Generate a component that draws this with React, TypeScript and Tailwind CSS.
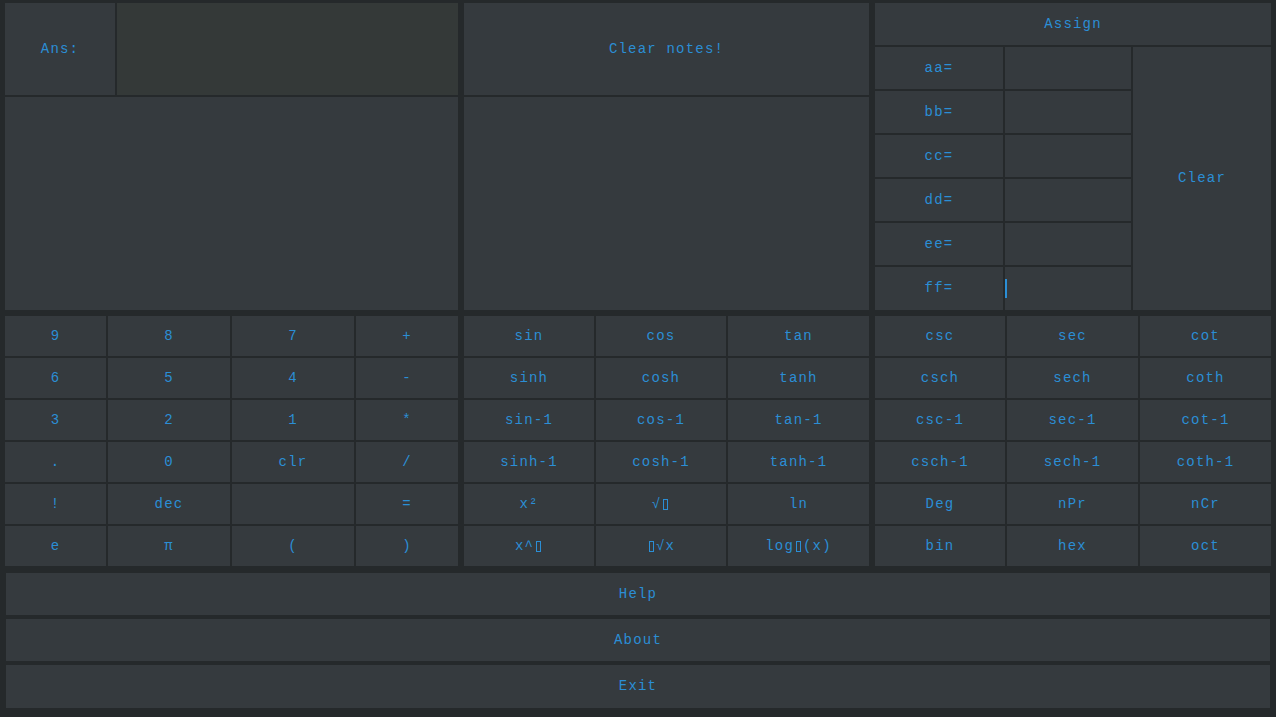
import React from "react";

const cell = "bg-[#353a3e] flex items-center justify-center text-[#2b8ed5]";

function Tofu() {
  return <span className="inline-block w-[5px] h-[11px] border border-[#2b8ed5] align-[-1px] mx-[2px]" />;
}

const basicKeys: React.ReactNode[] = [
  "9", "8", "7", "+",
  "6", "5", "4", "-",
  "3", "2", "1", "*",
  ".", "0", "clr", "/",
  "!", "dec", "", "=",
  "e", "π", "(", ")",
];

const trigKeys: React.ReactNode[] = [
  "sin", "cos", "tan",
  "sinh", "cosh", "tanh",
  "sin-1", "cos-1", "tan-1",
  "sinh-1", "cosh-1", "tanh-1",
  "x²",
  <>√<Tofu /></>,
  "ln",
  <>x^<Tofu /></>,
  <><Tofu />√x</>,
  <>log<Tofu />(x)</>,
];

const moreKeys: React.ReactNode[] = [
  "csc", "sec", "cot",
  "csch", "sech", "coth",
  "csc-1", "sec-1", "cot-1",
  "csch-1", "sech-1", "coth-1",
  "Deg", "nPr", "nCr",
  "bin", "hex", "oct",
];

const vars = ["aa=", "bb=", "cc=", "dd=", "ee=", "ff="];

export default function App() {
  return (
    <div
      className="w-[1276px] h-[717px] bg-[#25292b] pt-[3px] flex flex-col text-[14px] tracking-[1.2px] overflow-hidden"
      style={{ fontFamily: '"Liberation Mono", "Courier New", monospace' }}
    >
      {/* top: answer, notes, variables */}
      <div className="flex h-[307px] pl-[5px] gap-[6px]">
        <div className="w-[453px] flex flex-col gap-[2px]">
          <div className="h-[92px] flex gap-[2px]">
            <div className={`${cell} w-[110px]`}>Ans:</div>
            <div className="flex-1 bg-[#343938]" />
          </div>
          <div className="flex-1 bg-[#353a3e]" />
        </div>

        <div className="w-[405px] flex flex-col gap-[2px]">
          <div className={`${cell} h-[92px]`}>Clear notes!</div>
          <div className="flex-1 bg-[#353a3e]" />
        </div>

        <div className="w-[396px] grid grid-cols-[128px_126px_138px] grid-rows-[42px_42px_42px_42px_42px_42px_43px] gap-[2px]">
          <div className={`${cell} col-span-3`}>Assign</div>
          {vars.map((v, i) => (
            <React.Fragment key={v}>
              <div className={`${cell} col-start-1`} style={{ gridRowStart: i + 2 }}>
                {v}
              </div>
              <div className="bg-[#353a3e] col-start-2 flex items-center" style={{ gridRowStart: i + 2 }}>
                {v === "ff=" && <div className="w-[2px] h-[19px] bg-[#2b8ed5]" />}
              </div>
            </React.Fragment>
          ))}
          <div className={`${cell} col-start-3 row-start-2 row-span-6`}>Clear</div>
        </div>
      </div>

      {/* keypads */}
      <div className="flex h-[250px] mt-[6px] pl-[5px] gap-[6px]">
        <div className="w-[453px] grid grid-cols-[101px_122px_122px_102px] grid-rows-6 gap-[2px]">
          {basicKeys.map((k, i) => (
            <div key={i} className={cell}>{k}</div>
          ))}
        </div>
        <div className="w-[405px] grid grid-cols-[130px_130px_141px] grid-rows-6 gap-[2px]">
          {trigKeys.map((k, i) => (
            <div key={i} className={cell}>{k}</div>
          ))}
        </div>
        <div className="w-[396px] grid grid-cols-[130px_131px_131px] grid-rows-6 gap-[2px]">
          {moreKeys.map((k, i) => (
            <div key={i} className={cell}>{k}</div>
          ))}
        </div>
      </div>

      {/* bottom actions */}
      <div className="flex flex-col gap-[4px] mt-[7px] pl-[6px] w-[1270px]">
        <div className={`${cell} h-[42px]`}>Help</div>
        <div className={`${cell} h-[42px]`}>About</div>
        <div className={`${cell} h-[43px]`}>Exit</div>
      </div>
    </div>
  );
}
